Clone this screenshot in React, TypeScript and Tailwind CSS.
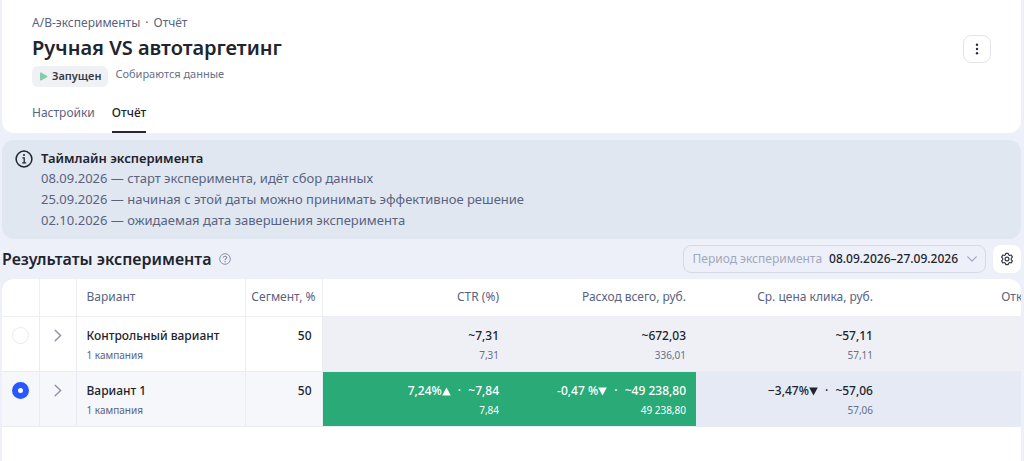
import { useState } from "react";
import { clsx } from "clsx";

type Tone = "neutral" | "success" | "selected";
type Trend = "up" | "down";

interface Metric {
  delta?: string;
  trend?: Trend;
  estimate: string;
  actual: string;
  tone: Tone;
}

interface Variant {
  id: string;
  name: string;
  campaigns: string;
  segment: number;
  metrics: Metric[];
}

const METRIC_COLUMNS = ["CTR (%)", "Расход всего, руб.", "Ср. цена клика, руб.", "Отказы, %"];

const VARIANTS: Variant[] = [
  {
    id: "control",
    name: "Контрольный вариант",
    campaigns: "1 кампания",
    segment: 50,
    metrics: [
      { estimate: "~7,31", actual: "7,31", tone: "neutral" },
      { estimate: "~672,03", actual: "336,01", tone: "neutral" },
      { estimate: "~57,11", actual: "57,11", tone: "neutral" },
      { estimate: "", actual: "", tone: "neutral" },
    ],
  },
  {
    id: "variant-1",
    name: "Вариант 1",
    campaigns: "1 кампания",
    segment: 50,
    metrics: [
      { delta: "7,24%", trend: "up", estimate: "~7,84", actual: "7,84", tone: "success" },
      { delta: "-0,47 %", trend: "down", estimate: "~49 238,80", actual: "49 238,80", tone: "success" },
      { delta: "−3,47%", trend: "down", estimate: "~57,06", actual: "57,06", tone: "selected" },
      { estimate: "", actual: "", tone: "selected" },
    ],
  },
];

const TIMELINE = [
  "08.09.2026 — старт эксперимента, идёт сбор данных",
  "25.09.2026 — начиная с этой даты можно принимать эффективное решение",
  "02.10.2026 — ожидаемая дата завершения эксперимента",
];

function TrendIcon({ trend }: { trend: Trend }) {
  return (
    <svg viewBox="0 0 9 9" className="inline-block size-[9px] fill-current" aria-hidden="true">
      <path d={trend === "up" ? "M4.5 0.5 8.8 8.5H0.2Z" : "M0.2 0.5H8.8L4.5 8.5Z"} />
    </svg>
  );
}

function GearIcon() {
  return (
    <svg viewBox="0 0 14 14" className="size-[14px]" fill="none" stroke="currentColor" strokeWidth="1.2" strokeLinejoin="round" aria-hidden="true">
      <path d="M5.8 1.3h2.4l.4 1.5 1.1.65 1.5-.45 1.2 2.1-1.1 1.1v1.6l1.1 1.1-1.2 2.1-1.5-.45-1.1.65-.4 1.5H5.8l-.4-1.5-1.1-.65-1.5.45-1.2-2.1 1.1-1.1V6.2L1.6 5.1 2.8 3l1.5.45 1.1-.65Z" />
      <circle cx="7" cy="7" r="1.9" />
    </svg>
  );
}

function MetricCell({ metric }: { metric: Metric }) {
  const success = metric.tone === "success";

  return (
    <td
      className={clsx(
        "whitespace-nowrap pr-[10px] text-right align-top",
        metric.tone === "neutral" && "bg-[#eff0f5]",
        metric.tone === "selected" && "bg-[#e6eaf4]",
        success && "bg-[#29aa76] text-white",
      )}
    >
      <div className="pt-[10px] text-xs leading-[18px] font-medium">
        {metric.delta && metric.trend && (
          <>
            {metric.delta}
            <TrendIcon trend={metric.trend} />
            <span className="mx-1"> · </span>
          </>
        )}
        {metric.estimate}
      </div>
      <div className={clsx("pt-px text-[10px] leading-[18px]", !success && "text-[#66708c]")}>
        {metric.actual}
      </div>
    </td>
  );
}

function PageHeader() {
  return (
    <header className="flex items-start justify-between rounded-b-xl bg-white pr-[30px] pl-[30px]">
      <div>
        <nav aria-label="Навигация" className="pt-[14px] text-xs leading-[18px] text-[#59637f]">
          <a href="#experiments">A/B-эксперименты</a>
          <span className="mx-[5px]">·</span>
          <a href="#report">Отчёт</a>
        </nav>
        <h1 className="pt-px text-xl leading-[30px] font-semibold text-[#20242e]">
          Ручная VS автотаргетинг
        </h1>
        <div className="mt-[3px] flex items-start">
          <span className="flex h-[21px] items-center gap-1 rounded-md bg-[#f0f1f5] px-[7px] text-[11px] font-semibold text-[#353a46]">
            <svg viewBox="0 0 9 9" className="size-[9px]" aria-hidden="true">
              <path d="M1 1.2C1 .5 1.6.3 2.2.6L7.9 3.8C8.5 4.2 8.5 4.8 7.9 5.2L2.2 8.4C1.6 8.7 1 8.5 1 7.8Z" fill="#82cdaa" />
            </svg>
            Запущен
          </span>
          <span className="ml-[7px] text-[11px] leading-4 text-[#66708c]">Собираются данные</span>
        </div>
        <nav aria-label="Разделы эксперимента" className="mt-[14px] flex gap-[17px] text-xs text-[#59637f]">
          <a href="#settings" className="flex h-8 pt-[3px] leading-[18px]">
            Настройки
          </a>
          <a
            href="#report"
            aria-current="page"
            className="flex h-8 border-b-2 border-[#292632] pt-[3px] leading-[18px] font-medium text-[#20242e]"
          >
            Отчёт
          </a>
        </nav>
      </div>
      <button
        type="button"
        aria-label="Действия"
        className="mt-[35px] flex size-7 items-center justify-center rounded-lg border border-[#e3e4ea] text-[#292d37]"
      >
        <svg viewBox="0 0 12 12" className="size-3 fill-current" aria-hidden="true">
          <circle cx="6" cy="1.7" r="1.2" />
          <circle cx="6" cy="6" r="1.2" />
          <circle cx="6" cy="10.3" r="1.2" />
        </svg>
      </button>
    </header>
  );
}

function TimelineNotice() {
  return (
    <section className="mt-[7px] flex gap-2 rounded-xl bg-[#e0e7f1] pt-2 pr-3 pb-2 pl-[13px]">
      <svg viewBox="0 0 18 18" className="mt-[2px] size-[18px] shrink-0" fill="none" stroke="#20242e" aria-hidden="true">
        <circle cx="9" cy="9" r="7.9" strokeWidth="1.5" />
        <path d="M7.3 7.8h1.9v5.1M7.2 12.9h4" strokeWidth="1.3" />
        <circle cx="9" cy="5.1" r="1" fill="#20242e" stroke="none" />
      </svg>
      <div className="text-[13px] leading-[21px] text-[#59637f]">
        <h2 className="leading-[20px] font-semibold text-[#20242e]">Таймлайн эксперимента</h2>
        {TIMELINE.map((line) => (
          <p key={line}>{line}</p>
        ))}
      </div>
    </section>
  );
}

function ResultsToolbar() {
  return (
    <div className="flex items-center justify-between pt-[6px] pb-[6px]">
      <div className="flex items-center gap-2">
        <h2 className="text-base leading-6 font-semibold text-[#20242e]">Результаты эксперимента</h2>
        <button type="button" aria-label="Справка" className="text-[#8b92ab]">
          <svg viewBox="0 0 12 12" className="size-3" fill="none" stroke="currentColor" aria-hidden="true">
            <circle cx="6" cy="6" r="5.3" />
            <path d="M4.4 4.7C4.4 2.7 7.7 2.7 7.7 4.6 7.7 5.8 6.1 5.8 6.1 7.2" strokeWidth="1.1" />
            <circle cx="6.1" cy="8.8" r=".7" fill="currentColor" stroke="none" />
          </svg>
        </button>
      </div>
      <div className="flex items-center gap-[7px]">
        <button
          type="button"
          aria-haspopup="dialog"
          className="flex h-7 items-center rounded-lg border border-[#d5d9e5] px-2 text-xs text-[#20242e]"
        >
          <span className="text-[#a1a8bd]">Период эксперимента</span>
          <span className="ml-[7px] font-medium">08.09.2026–27.09.2026</span>
          <svg viewBox="0 0 10 6" className="ml-[9px] h-[6px] w-[10px]" fill="none" stroke="#a1a8bd" strokeWidth="1.2" strokeLinecap="round" aria-hidden="true">
            <path d="M.8.8 5 5.1 9.2.8" />
          </svg>
        </button>
        <button
          type="button"
          aria-label="Настройки таблицы"
          className="flex size-7 items-center justify-center rounded-lg bg-white text-[#353a46]"
        >
          <GearIcon />
        </button>
      </div>
    </div>
  );
}

function ResultsTable() {
  const [selected, setSelected] = useState("variant-1");

  return (
    <div className="grow overflow-hidden rounded-t-xl bg-white">
      <table className="w-full min-w-[1068px] table-fixed border-collapse text-xs text-[#20242e]">
        <colgroup>
          <col className="w-[37px]" />
          <col className="w-[37px]" />
          <col className="w-[169px]" />
          <col className="w-[77px]" />
          {METRIC_COLUMNS.map((column) => (
            <col key={column} />
          ))}
        </colgroup>
        <thead>
          <tr className="h-[37px] border-b border-[#edeef4] text-[#59637f]">
            <th className="border-r border-[#edeef4]" aria-label="Выбор" />
            <th className="border-r border-[#edeef4]" aria-label="Подробнее" />
            <th className="border-r border-[#edeef4] pl-[10px] text-left font-normal">Вариант</th>
            <th className="border-r border-[#edeef4] pr-[6px] text-right font-normal whitespace-nowrap">
              Сегмент, %
            </th>
            {METRIC_COLUMNS.map((column) => (
              <th key={column} className="pr-[10px] text-right font-normal whitespace-nowrap">
                {column}
              </th>
            ))}
          </tr>
        </thead>
        <tbody>
          {VARIANTS.map((variant) => (
            <tr
              key={variant.id}
              className={clsx(
                "h-[55px] border-b border-[#e9ecf3]",
                variant.id === selected && "bg-[#f5f7fb]",
              )}
            >
              <td className="border-r border-[#e9ecf3] pt-[10px] align-top">
                <input
                  type="radio"
                  name="variant"
                  aria-label={variant.name}
                  checked={variant.id === selected}
                  onChange={() => setSelected(variant.id)}
                  className="mx-auto block size-[17px] appearance-none rounded-full border border-[#e9ebf1] bg-white checked:border-[6px] checked:border-[#2859ff]"
                />
              </td>
              <td className="border-r border-[#e9ecf3] pt-3 align-top">
                <button type="button" aria-label={`Развернуть: ${variant.name}`} className="mx-auto block">
                  <svg viewBox="0 0 8 13" className="h-[13px] w-2" fill="none" stroke="#8b92a8" strokeWidth="1.4" strokeLinecap="round" aria-hidden="true">
                    <path d="M1.2 1.2 6.6 6.5 1.2 11.8" />
                  </svg>
                </button>
              </td>
              <td className="border-r border-[#e9ecf3] pl-[10px] align-top">
                <div className="pt-[10px] leading-[18px] font-medium">{variant.name}</div>
                <div className="pt-px text-[10px] leading-[18px] text-[#59637f]">{variant.campaigns}</div>
              </td>
              <td className="border-r border-[#e9ecf3] pt-[10px] pr-[10px] text-right align-top leading-[18px] font-medium">
                {variant.segment}
              </td>
              {variant.metrics.map((metric, index) => (
                <MetricCell key={METRIC_COLUMNS[index]} metric={metric} />
              ))}
            </tr>
          ))}
        </tbody>
      </table>
    </div>
  );
}

export default function App() {
  return (
    <main className="flex min-h-screen flex-col bg-[#edf0f9] pr-[3px] pl-[2px] font-['Noto_Sans',sans-serif]">
      <PageHeader />
      <TimelineNotice />
      <ResultsToolbar />
      <ResultsTable />
    </main>
  );
}
